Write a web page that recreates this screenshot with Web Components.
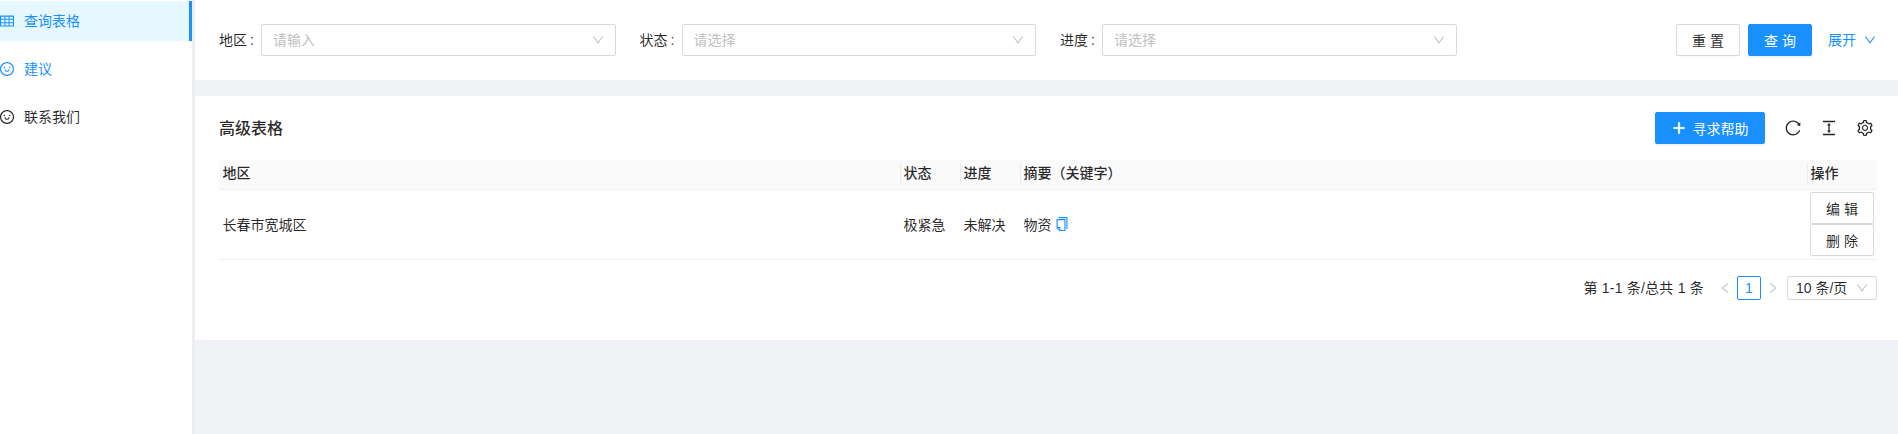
<!DOCTYPE html>
<html lang="zh">
<head>
<meta charset="utf-8">
<title>高级表格</title>
<style>
html, body { margin: 0; height: 100%; overflow: hidden; background: #f0f2f5; }
body {
  font-family: "Liberation Sans", "Noto Sans CJK SC", sans-serif;
  font-size: 14px;
  color: rgba(0,0,0,.85);
}
app-shell:not(:defined) { display: none; }
</style>
</head>
<body>

<app-shell>
  <side-menu slot="side">
    <menu-item icon="table" state="selected">查询表格</menu-item>
    <menu-item icon="smile" state="active">建议</menu-item>
    <menu-item icon="smile">联系我们</menu-item>
  </side-menu>

  <search-form>
    <form-field label="地区" placeholder="请输入"></form-field>
    <form-field label="状态" placeholder="请选择"></form-field>
    <form-field label="进度" placeholder="请选择"></form-field>
    <ui-button slot="actions">重 置</ui-button>
    <ui-button slot="actions" primary>查 询</ui-button>
  </search-form>

  <table-card heading="高级表格">
    <ui-button slot="tools" primary wide><ui-icon name="plus" size="14" bold style="margin-right:7px"></ui-icon>寻求帮助</ui-button>
    <ui-icon slot="tools" name="reload" size="16"></ui-icon>
    <ui-icon slot="tools" name="height" size="16"></ui-icon>
    <ui-icon slot="tools" name="setting" size="16"></ui-icon>

    <data-table></data-table>
    <table-pager></table-pager>
  </table-card>
</app-shell>

<script>
const ICONS = {
  down: '<path d="M884 256h-75c-5.1 0-9.9 2.5-12.9 6.6L512 654.2 227.9 262.6c-3-4.1-7.8-6.6-12.9-6.6h-75c-6.5 0-10.3 7.4-6.5 12.7l352.6 486.1c12.8 17.6 39 17.6 51.7 0l352.6-486.1c3.9-5.3.1-12.7-6.4-12.7z"/>',
  left: '<path d="M724 218.3V141c0-6.7-7.7-10.4-12.9-6.3L260.3 486.8a31.86 31.86 0 000 50.3l450.8 352.1c5.3 4.1 12.9.4 12.9-6.3v-77.3c0-4.9-2.3-9.6-6.1-12.6l-360-281 360-281.1c3.8-3 6.1-7.7 6.1-12.6z"/>',
  right: '<path d="M765.7 486.8L314.9 134.7A7.97 7.97 0 00302 141v77.3c0 4.9 2.3 9.6 6.1 12.6l360 281.1-360 281.1c-3.9 3-6.1 7.7-6.1 12.6V883c0 6.7 7.7 10.4 12.9 6.3l450.8-352.1a31.96 31.96 0 000-50.4z"/>',
  plus: '<path d="M482 152h60q8 0 8 8v704q0 8-8 8h-60q-8 0-8-8V160q0-8 8-8z"/><path d="M176 474h672q8 0 8 8v60q0 8-8 8H176q-8 0-8-8v-60q0-8 8-8z"/>',
  reload: '<path d="M909.1 209.3l-56.4 44.1C775.8 155.1 656.2 92 521.9 92 290 92 102.3 279.5 102 511.5 101.7 743.7 289.8 932 521.9 932c181.3 0 335.8-115 394.6-276.1 1.5-4.2-.7-8.9-4.9-10.3l-56.7-19.5a8 8 0 00-10.1 4.8c-1.8 5-3.8 10-5.9 14.9-17.3 41-42.1 77.8-73.7 109.4A344.77 344.77 0 01655.9 829c-42.3 17.9-87.4 27-133.8 27-46.5 0-91.5-9.1-133.8-27A341.5 341.5 0 01279 755.2a342.16 342.16 0 01-73.7-109.4c-17.9-42.4-27-87.4-27-133.9s9.1-91.5 27-133.9c17.3-41 42.1-77.8 73.7-109.4 31.6-31.6 68.4-56.4 109.3-73.8 42.3-17.9 87.4-27 133.8-27 46.5 0 91.5 9.1 133.8 27a341.5 341.5 0 01109.3 73.8c9.9 9.9 19.2 20.4 27.8 31.4l-60.2 47a8 8 0 003 14.1l175.6 43c5 1.2 9.9-2.6 9.9-7.7l.8-180.9c-.1-6.6-7.8-10.3-13-6.2z"/>',
  height: '<path d="M840 836H184c-4.4 0-8 3.6-8 8v60c0 4.4 3.6 8 8 8h656c4.4 0 8-3.6 8-8v-60c0-4.4-3.6-8-8-8zm0-724H184c-4.4 0-8 3.6-8 8v60c0 4.4 3.6 8 8 8h656c4.4 0 8-3.6 8-8v-60c0-4.4-3.6-8-8-8zM610.8 378c6 0 9.4-7 5.7-11.7L515.7 238.7a7.14 7.14 0 00-11.3 0L403.6 366.3a7.23 7.23 0 005.7 11.7H476v268h-62.8c-6 0-9.4 7-5.7 11.7l100.8 127.5c2.9 3.7 8.5 3.7 11.3 0l100.8-127.5c3.7-4.7.4-11.7-5.7-11.7H548V378h62.8z"/>',
  setting: '<path d="M924.8 625.7l-65.5-56c3.1-19 4.7-38.4 4.7-57.8s-1.6-38.8-4.7-57.8l65.5-56a32.03 32.03 0 009.3-35.2l-.9-2.6a443.74 443.74 0 00-79.7-137.9l-1.8-2.1a32.12 32.12 0 00-35.1-9.5l-81.3 28.9c-30-24.6-63.5-44-99.7-57.6l-15.7-85a32.05 32.05 0 00-25.8-25.7l-2.7-.5c-52.1-9.4-106.9-9.4-159 0l-2.7.5a32.05 32.05 0 00-25.8 25.7l-15.8 85.4a351.86 351.86 0 00-99 57.4l-81.9-29.1a32 32 0 00-35.1 9.5l-1.8 2.1a446.02 446.02 0 00-79.7 137.9l-.9 2.6c-4.5 12.5-.8 26.5 9.3 35.2l66.3 56.6c-3.1 18.8-4.6 38-4.6 57.1 0 19.2 1.5 38.4 4.6 57.1L99 625.5a32.03 32.03 0 00-9.3 35.2l.9 2.6c18.1 50.4 44.9 96.9 79.7 137.9l1.8 2.1a32.12 32.12 0 0035.1 9.5l81.9-29.1c29.8 24.5 63.1 43.9 99 57.4l15.8 85.4a32.05 32.05 0 0025.8 25.7l2.7.5a449.4 449.4 0 00159 0l2.7-.5a32.05 32.05 0 0025.8-25.7l15.7-85a350 350 0 0099.7-57.6l81.3 28.9a32 32 0 0035.1-9.5l1.8-2.1c34.8-41.1 61.6-87.5 79.7-137.9l.9-2.6c4.5-12.3.8-26.3-9.3-35zM788.3 465.9c2.5 15.1 3.8 30.6 3.8 46.1s-1.3 31-3.8 46.1l-6.6 40.1 74.7 63.9a370.03 370.03 0 01-42.6 73.6L721 702.8l-31.4 25.8c-23.9 19.6-50.5 35-79.3 45.8l-38.1 14.3-17.9 97a377.5 377.5 0 01-85 0l-17.9-97.2-37.8-14.5c-28.5-10.8-55-26.2-78.7-45.7l-31.4-25.9-93.4 33.2c-17-22.9-31.2-47.6-42.6-73.6l75.5-64.5-6.5-40c-2.4-14.9-3.7-30.3-3.7-45.5 0-15.3 1.2-30.6 3.7-45.5l6.5-40-75.5-64.5c11.3-26.1 25.6-50.7 42.6-73.6l93.4 33.2 31.4-25.9c23.7-19.5 50.2-34.9 78.7-45.7l37.9-14.3 17.9-97.2c28.1-3.2 56.8-3.2 85 0l17.9 97 38.1 14.3c28.7 10.8 55.4 26.2 79.3 45.8l31.4 25.8 92.8-32.9c17 22.9 31.2 47.6 42.6 73.6L781.8 426l6.5 39.9zM512 326c-97.2 0-176 78.8-176 176s78.8 176 176 176 176-78.8 176-176-78.8-176-176-176zm79.2 255.2A111.6 111.6 0 01512 614c-29.9 0-58-11.7-79.2-32.8A111.6 111.6 0 01400 502c0-29.9 11.7-58 32.8-79.2C454 401.6 482.1 390 512 390c29.9 0 58 11.6 79.2 32.8A111.6 111.6 0 01624 502c0 29.9-11.7 58-32.8 79.2z"/>',
  smile: '<path d="M288 421a48 48 0 1096 0 48 48 0 10-96 0zm352 0a48 48 0 1096 0 48 48 0 10-96 0zM512 64C264.6 64 64 264.6 64 512s200.6 448 448 448 448-200.6 448-448S759.4 64 512 64zm263 711c-34.2 34.2-74 61-118.3 79.8C611 874.2 562.3 884 512 884c-50.3 0-99-9.8-144.8-29.2A370.4 370.4 0 01248.9 775c-34.2-34.2-61-74-79.8-118.3C149.8 611 140 562.3 140 512s9.8-99 29.2-144.8A370.4 370.4 0 01249 248.9c34.2-34.2 74-61 118.3-79.8C413 149.8 461.7 140 512 140c50.3 0 99 9.8 144.8 29.2A370.4 370.4 0 01775.1 249c34.2 34.2 61 74 79.8 118.3C874.2 413 884 461.7 884 512s-9.8 99-29.2 144.8A368.89 368.89 0 01775 775zM664 533h-48.1c-4.2 0-7.8 3.2-8.1 7.4C604 589.9 562.5 629 512 629s-92.1-39.1-95.8-88.6c-.3-4.2-3.9-7.4-8.1-7.4H360a8 8 0 00-8 8.4c4.4 84.3 74.5 151.6 160 151.6s155.6-67.3 160-151.6a8 8 0 00-8-8.4z"/>',
  table: '<path d="M928 160H96c-17.7 0-32 14.3-32 32v640c0 17.7 14.3 32 32 32h832c17.7 0 32-14.3 32-32V192c0-17.7-14.3-32-32-32zm-40 208H676V232h212v136zm0 224H676V432h212v160zM412 432h200v160H412V432zm200-64H412V232h200v136zm-264 0H136V232h212v136zm-212 64h212v160H136V432zm0 224h212v136H136V656zm276 0h200v136H412V656zm476 136H676V656h212v136z"/>',
  copy: '<path d="M832 64H296c-4.4 0-8 3.6-8 8v56c0 4.4 3.6 8 8 8h496v688c0 4.4 3.6 8 8 8h56c4.4 0 8-3.6 8-8V96c0-17.7-14.3-32-32-32zM704 192H192c-17.7 0-32 14.3-32 32v530.7c0 8.5 3.4 16.6 9.4 22.6l173.3 173.3c2.2 2.2 4.7 4 7.4 5.5v1.9h4.2c3.5 1.3 7.2 2 11 2H704c17.7 0 32-14.3 32-32V224c0-17.7-14.3-32-32-32zM350 856.2L263.9 770H350v86.2zM664 888H414V746c0-22.1-17.9-40-40-40H232V264h432v624z"/>'
};

// small base class, every element just hands over its shadow markup
class ShadowElement extends HTMLElement {
  connectedCallback() {
    if (this.shadowRoot) return;
    this.attachShadow({ mode: 'open' });
    this.shadowRoot.innerHTML = this.markup();
  }
}

class UiIcon extends ShadowElement {
  markup() {
    const size = this.getAttribute('size') || 14;
    return `<style>
      :host { display: inline-flex; flex: none; width: ${size}px; height: ${size}px; }
      svg { display: block; width: 100%; height: 100%; fill: currentColor; }
      :host([bold]) svg { stroke: currentColor; stroke-width: 50; }
    </style>
    <svg viewBox="64 64 896 896">${ICONS[this.getAttribute('name')] || ''}</svg>`;
  }
}

class AppShell extends ShadowElement {
  markup() {
    return `<style>
      :host { display: flex; height: 434px; align-items: stretch; }
      main { flex: 1; min-width: 0; display: flex; flex-direction: column; gap: 16px; }
    </style>
    <slot name="side"></slot>
    <main><slot></slot></main>`;
  }
}

class SideMenu extends ShadowElement {
  markup() {
    return `<style>
      :host {
        display: flex; flex-direction: column; gap: 8px; flex: none;
        box-sizing: border-box; width: 195px; padding-top: 1px;
        background: #fff; border-right: 3px solid #eceef3;
      }
    </style>
    <slot></slot>`;
  }
}

class MenuItem extends ShadowElement {
  markup() {
    return `<style>
      :host {
        display: flex; align-items: center; gap: 10px; box-sizing: border-box;
        height: 40px; line-height: 40px; color: rgba(0,0,0,.85);
      }
      :host([state="active"]) { color: #1890ff; }
      :host([state="selected"]) {
        color: #1890ff; background: #e6f7ff; border-right: 3px solid #1890ff;
      }
    </style>
    <ui-icon name="${this.getAttribute('icon')}" size="14"></ui-icon>
    <slot></slot>`;
  }
}

class UiButton extends ShadowElement {
  markup() {
    return `<style>
      :host {
        display: inline-flex; align-items: center; justify-content: center; flex: none;
        box-sizing: border-box; width: 64px; height: 32px; white-space: pre;
        background: #fff; color: rgba(0,0,0,.85);
        border: 1px solid #d9d9d9; border-radius: 2px;
        box-shadow: 0 2px 0 rgba(0,0,0,.015);
      }
      :host([primary]) {
        background: #1890ff; border-color: #1890ff; color: #fff;
        box-shadow: 0 2px 0 rgba(0,0,0,.045);
      }
      :host([wide]) { width: 110px; }
    </style>
    <slot></slot>`;
  }
}

class FormField extends ShadowElement {
  markup() {
    return `<style>
      :host { display: flex; align-items: center; flex: none; width: 396.5px; }
      label { flex: none; width: 42px; padding-bottom: 2px; }
      .colon { margin-left: 3px; }
      .select {
        flex: 1; height: 32px; box-sizing: border-box; padding: 0 11px;
        display: flex; align-items: center; justify-content: space-between;
        background: #fff; border: 1px solid #d9d9d9; border-radius: 2px;
        color: #bfbfbf;
      }
      .select span { padding-bottom: 2px; }
    </style>
    <label>${this.getAttribute('label')}<span class="colon">:</span></label>
    <div class="select">
      <span>${this.getAttribute('placeholder')}</span>
      <ui-icon name="down" size="12"></ui-icon>
    </div>`;
  }
}

class SearchForm extends ShadowElement {
  markup() {
    return `<style>
      :host {
        display: flex; align-items: center; flex: none; box-sizing: border-box;
        height: 80px; padding: 0 22px 0 24px; background: #fff;
      }
      .fields { display: flex; gap: 24px; }
      .actions { margin-left: auto; display: flex; align-items: center; gap: 8px; }
      .expand { display: flex; align-items: center; gap: 8px; margin-left: 8px; color: #1890ff; }
      .expand span { padding-bottom: 2px; }
    </style>
    <div class="fields"><slot></slot></div>
    <div class="actions">
      <slot name="actions"></slot>
      <span class="expand"><span>展开</span><ui-icon name="down" size="12"></ui-icon></span>
    </div>`;
  }
}

class TableCard extends ShadowElement {
  markup() {
    return `<style>
      :host {
        display: block; flex: none; box-sizing: border-box;
        height: 244px; padding: 16px 21px 0 24px; background: #fff;
      }
      header { display: flex; align-items: center; height: 32px; margin-bottom: 16px; }
      h2 { margin: 0 0 2px; font-size: 16px; font-weight: 500; color: rgba(0,0,0,.85); }
      .tools { margin-left: auto; display: flex; align-items: center; gap: 20px; padding-right: 4px; }
    </style>
    <header>
      <h2>${this.getAttribute('heading')}</h2>
      <div class="tools"><slot name="tools"></slot></div>
    </header>
    <slot></slot>`;
  }
}

class DataTable extends ShadowElement {
  markup() {
    const heads = ['地区', '状态', '进度', '摘要（关键字）', '操作'];
    return `<style>
      :host {
        display: grid; grid-template-columns: 681px 60px 60px 787px 70px;
      }
      .th {
        background: #fafafa; border-bottom: 1px solid #f0f0f0; font-weight: 500;
        padding: 3px 0; height: 23px;
      }
      .th span {
        display: block; height: 22px; line-height: 21px; padding-left: 2.5px;
        border-left: 1px solid rgba(0,0,0,.06);
      }
      .th:first-of-type span { border-left-color: transparent; }
      .td {
        box-sizing: border-box; height: 70px; border-bottom: 1px solid #f0f0f0;
        padding: 0 0 2px 3.5px; display: flex; align-items: center;
      }
      .copy { color: #1890ff; margin-left: 3px; }
      .ops { flex-direction: column; align-items: flex-start; justify-content: flex-start; padding: 2px 0 0 3px; }
    </style>
    ${heads.map(h => `<div class="th"><span>${h}</span></div>`).join('')}
    <div class="td">长春市宽城区</div>
    <div class="td">极紧急</div>
    <div class="td">未解决</div>
    <div class="td">物资<ui-icon class="copy" name="copy" size="14"></ui-icon></div>
    <div class="td ops"><ui-button>编 辑</ui-button><ui-button>删 除</ui-button></div>`;
  }
}

class TablePager extends ShadowElement {
  markup() {
    return `<style>
      :host {
        display: flex; justify-content: flex-end; align-items: center;
        height: 24px; margin-top: 16px; line-height: 24px; white-space: pre;
      }
      .total { margin-right: 9px; letter-spacing: .22px; }
      .arrow { display: flex; width: 24px; justify-content: center; color: #bfbfbf; }
      .page {
        box-sizing: border-box; width: 24px; height: 24px; line-height: 22px; text-align: center;
        color: #1890ff; border: 1px solid #1890ff; border-radius: 2px;
      }
      .size {
        box-sizing: border-box; width: 90px; height: 24px; line-height: 22px; margin-left: 2px;
        padding: 0 8px; display: flex; align-items: center; justify-content: space-between;
        border: 1px solid #d9d9d9; border-radius: 2px;
      }
      .size ui-icon { color: #bfbfbf; }
    </style>
    <span class="total">第 1-1 条/总共 1 条</span>
    <span class="arrow"><ui-icon name="left" size="12"></ui-icon></span>
    <span class="page">1</span>
    <span class="arrow"><ui-icon name="right" size="12"></ui-icon></span>
    <span class="size"><span>10 条/页</span><ui-icon name="down" size="12"></ui-icon></span>`;
  }
}

customElements.define('ui-icon', UiIcon);
customElements.define('ui-button', UiButton);
customElements.define('menu-item', MenuItem);
customElements.define('side-menu', SideMenu);
customElements.define('form-field', FormField);
customElements.define('search-form', SearchForm);
customElements.define('data-table', DataTable);
customElements.define('table-pager', TablePager);
customElements.define('table-card', TableCard);
customElements.define('app-shell', AppShell);
</script>
</body>
</html>
